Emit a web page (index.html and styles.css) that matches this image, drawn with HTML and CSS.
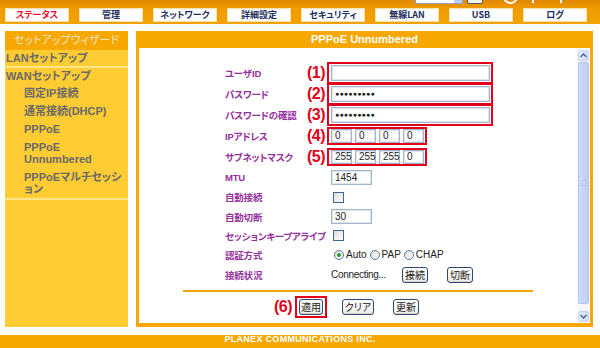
FILE: index.html
```html
<!DOCTYPE html>
<html lang="ja">
  <head>
    <meta charset="UTF-8" />
    <title>PPPoE Unnumbered</title>
    <link rel="stylesheet" href="styles.css">
  </head>
  <body>
    <header class="topbar">
      <div class="top-tools">
        <div class="lang-select"><span class="lang-arrow"></span></div>
        <div class="lang-btn"></div>
        <div class="logo-ring"></div>
        <div class="logo-mark logo-mark-1"></div>
        <div class="logo-mark logo-mark-2"></div>
      </div>
      <nav class="tabs">
        <div class="tab tab-active">ステータス</div>
        <div class="tab">管理</div>
        <div class="tab">ネットワーク</div>
        <div class="tab">詳細設定</div>
        <div class="tab">セキュリティ</div>
        <div class="tab">無線LAN</div>
        <div class="tab">USB</div>
        <div class="tab">ログ</div>
      </nav>
    </header>

    <div class="layout">
      <aside class="sidebar">
        <div class="side-head">セットアップウィザード</div>
        <div class="side-item side-lan">LANセットアップ</div>
        <div class="side-item side-wan">WANセットアップ</div>
        <ul class="side-sub">
          <li>固定IP接続</li>
          <li>通常接続(DHCP)</li>
          <li>PPPoE</li>
          <li class="two">PPPoE<br>Unnumbered</li>
          <li class="two">PPPoEマルチセッシ<br>ョン</li>
        </ul>
      </aside>

      <section class="panel">
        <h1 class="panel-title">PPPoE Unnumbered</h1>
        <div class="panel-body">
          <div class="form">
            <div class="row">
              <span class="label">ユーザID</span>
              <span class="mark">(1)</span>
              <span class="box"><span class="field field-wide"></span></span>
            </div>
            <div class="row">
              <span class="label">パスワード</span>
              <span class="mark">(2)</span>
              <span class="box"><span class="field field-wide dots">●●●●●●●●●</span></span>
            </div>
            <div class="row">
              <span class="label">パスワードの確認</span>
              <span class="mark">(3)</span>
              <span class="box"><span class="field field-wide dots">●●●●●●●●●</span></span>
            </div>
            <div class="row">
              <span class="label">IPアドレス</span>
              <span class="mark">(4)</span>
              <span class="box box-ip">
                <span class="field oct">0</span><span class="sep">.</span>
                <span class="field oct">0</span><span class="sep">.</span>
                <span class="field oct">0</span><span class="sep">.</span>
                <span class="field oct">0</span>
              </span>
            </div>
            <div class="row">
              <span class="label">サブネットマスク</span>
              <span class="mark">(5)</span>
              <span class="box box-ip">
                <span class="field oct">255</span><span class="sep">.</span>
                <span class="field oct">255</span><span class="sep">.</span>
                <span class="field oct">255</span><span class="sep">.</span>
                <span class="field oct">0</span>
              </span>
            </div>
            <div class="row row-s">
              <span class="label">MTU</span>
              <span class="mark"></span>
              <span class="field field-short plain">1454</span>
            </div>
            <div class="row row-s">
              <span class="label">自動接続</span>
              <span class="mark"></span>
              <span class="check"></span>
            </div>
            <div class="row row-xs">
              <span class="label">自動切断</span>
              <span class="mark"></span>
              <span class="field field-short plain">30</span>
            </div>
            <div class="row row-xs">
              <span class="label">セッションキープアライブ</span>
              <span class="mark"></span>
              <span class="check"></span>
            </div>
            <div class="row row-xs">
              <span class="label">認証方式</span>
              <span class="mark"></span>
              <span class="radios">
                <span class="opt"><span class="radio radio-on"></span>Auto</span>
                <span class="opt"><span class="radio"></span>PAP</span>
                <span class="opt"><span class="radio"></span>CHAP</span>
              </span>
            </div>
            <div class="row">
              <span class="label">接続状況</span>
              <span class="mark"></span>
              <span class="status">Connecting...</span>
              <span class="btn btn-conn">接続</span>
              <span class="btn btn-conn btn-gap">切断</span>
            </div>

            <div class="rule"></div>

            <div class="actions">
              <span class="mark mark-inline">(6)</span>
              <span class="box box-btn"><span class="btn btn-apply">適用</span></span>
              <span class="btn btn-clear">クリア</span>
              <span class="btn btn-refresh">更新</span>
            </div>
          </div>

          <div class="scrollbar">
            <div class="sb-btn">
              <svg width="7" height="5" viewBox="0 0 7 5"><polyline points="0.5,4 3.5,1 6.5,4" fill="none" stroke="#4d6185" stroke-width="1.4"/></svg>
            </div>
            <div class="sb-thumb"><span class="sb-grip"></span></div>
            <div class="sb-gap"></div>
            <div class="sb-btn">
              <svg width="7" height="5" viewBox="0 0 7 5"><polyline points="0.5,1 3.5,4 6.5,1" fill="none" stroke="#4d6185" stroke-width="1.4"/></svg>
            </div>
          </div>
        </div>
      </section>
    </div>

    <footer class="footer">PLANEX COMMUNICATIONS INC.</footer>
  </body>
</html>
```

FILE: styles.css
```css
* {
  margin: 0;
  padding: 0;
  box-sizing: border-box;
}

body {
  width: 600px;
  height: 348px;
  overflow: hidden;
  background-color: #fff;
  font-family: "Liberation Sans", "Noto Sans CJK JP", sans-serif;
  font-feature-settings: "palt";
}

/* header band */

.topbar {
  position: relative;
  height: 24px;
  padding: 8px 0 0 5px;
  background: linear-gradient(#e08600 0, #ee9b00 8px, #f3a300 24px);
}

.top-tools {
  position: absolute;
  top: -9px;
  left: 415px;
  display: flex;
  align-items: flex-start;
}

.lang-select {
  width: 48px;
  height: 13px;
  background-color: #fff;
  border: 1px solid #8fa3c0;
  display: flex;
  justify-content: flex-end;
}

.lang-arrow {
  width: 8px;
  background-color: #b9cdf6;
}

.lang-btn {
  width: 16px;
  height: 13px;
  margin-left: 4px;
  background-color: #f3f2ec;
  border: 1px solid #5a5a5a;
  border-radius: 2px;
}

.logo-ring {
  width: 15px;
  height: 15px;
  margin: -2px 0 0 20px;
  border: 2px solid #fff;
  border-radius: 50%;
}

.logo-mark {
  width: 2px;
  height: 12px;
  background-color: #fff;
}

.logo-mark-1 {
  margin-left: 14px;
}

.logo-mark-2 {
  margin-left: 26px;
}

.tabs {
  display: flex;
  gap: 10px;
}

.tab {
  width: 64px;
  height: 14px;
  background-color: #fff;
  border: 1px solid #fbe0ac;
  color: #1d2d5c;
  font-family: "Noto Sans CJK JP", sans-serif;
  font-size: 9px;
  font-weight: bold;
  line-height: 12px;
  text-align: center;
}

.tab-active {
  color: #e8102e;
}

/* page body */

.layout {
  display: flex;
  gap: 8px;
  height: 303px;
  padding: 7px 0 0 5px;
}

.sidebar {
  width: 123px;
  background-color: #ffcc33;
  color: #696969;
  font-size: 11px;
  font-weight: bold;
}

.side-head {
  height: 19px;
  background-color: #f6a800;
  color: #f1e3c6;
  font-weight: normal;
  line-height: 19px;
  text-align: center;
}

.side-item {
  padding-left: 1px;
}

.side-lan {
  height: 18px;
  line-height: 16px;
  border-bottom: 2px solid #ffe48c;
}

.side-wan {
  margin-top: 2px;
  line-height: 12px;
}

.side-sub {
  list-style: none;
  margin-top: 5px;
  padding-left: 19px;
  border-bottom: 2px solid #ffe48c;
}

.side-sub li {
  line-height: 12px;
  margin-bottom: 6px;
}

.side-sub li.two {
  margin-top: 3px;
}

.side-sub li:last-child {
  margin-bottom: 3px;
}

.panel {
  width: 457px;
  display: flex;
  flex-direction: column;
  padding: 0 3px 4px;
  background-color: #f6a800;
}

.panel-title {
  height: 17px;
  color: #fff;
  font-size: 11px;
  font-weight: bold;
  line-height: 17px;
  text-align: center;
}

.panel-body {
  flex: 1;
  display: flex;
  min-width: 0;
  background-color: #fff;
}

.form {
  flex: 1;
  min-width: 0;
  padding: 14px 0 0 86px;
}

.row {
  display: flex;
  align-items: center;
  height: 21px;
}

.row-s {
  height: 20px;
}

.row-xs {
  height: 19px;
}

.label {
  width: 78px;
  flex-shrink: 0;
  color: #95319d;
  font-size: 9.5px;
  font-weight: bold;
  letter-spacing: -0.2px;
  white-space: nowrap;
}

.mark {
  width: 24px;
  flex-shrink: 0;
  padding-right: 2px;
  color: #e2001a;
  font-size: 16px;
  font-weight: bold;
  letter-spacing: -0.5px;
  text-align: right;
}

.box {
  display: flex;
  align-items: center;
  padding: 1px 1px 1px 2px;
  border: 2px solid #e2001a;
}

.box-ip {
  padding: 0 1px 0 2px;
}

.field {
  display: block;
  height: 16px;
  padding-left: 3px;
  border: 1px solid #a3b5cb;
  box-shadow: inset 0 0 0 1px #dfe6ee;
  color: #222;
  font-size: 10px;
  line-height: 14px;
  white-space: nowrap;
}

.field-wide {
  width: 159px;
}

.dots {
  font-size: 7px;
  letter-spacing: 0.2px;
}

.oct {
  width: 21px;
  height: 14px;
  line-height: 12px;
}

.sep {
  width: 3px;
  align-self: flex-end;
  color: #666;
  font-size: 7px;
  line-height: 7px;
  text-align: center;
}

.field-short {
  width: 41px;
  height: 15px;
  line-height: 13px;
}

.plain {
  margin-left: 4px;
}

.check {
  width: 11px;
  height: 11px;
  margin-left: 6px;
  border: 1px solid #3d6792;
  background: linear-gradient(135deg, #dddcd5, #fff);
}

.radios {
  display: flex;
  margin-left: 7px;
  font-size: 10px;
  color: #222;
}

.opt {
  display: flex;
  align-items: center;
  gap: 2px;
  margin-right: 3px;
}

.radio {
  position: relative;
  width: 10px;
  height: 10px;
  border: 1px solid #5e7a9c;
  border-radius: 50%;
  background: linear-gradient(135deg, #dcdcd5, #fff);
}

.radio-on::after {
  content: "";
  position: absolute;
  left: 2px;
  top: 2px;
  width: 4px;
  height: 4px;
  border-radius: 50%;
  background-color: #2f9a2f;
}

.status {
  width: 71px;
  margin-left: 4px;
  color: #222;
  font-size: 10px;
  letter-spacing: -0.3px;
  white-space: nowrap;
}

.btn {
  display: block;
  flex-shrink: 0;
  height: 16px;
  border: 1px solid #2d4a72;
  border-radius: 3px;
  background: linear-gradient(#fff, #ecebe4);
  box-shadow: inset 0 -1px 0 #d6d3c8;
  color: #222;
  font-family: "Noto Sans CJK JP", sans-serif;
  font-size: 10px;
  line-height: 14px;
  text-align: center;
  white-space: nowrap;
}

.btn-conn {
  width: 26px;
}

.btn-gap {
  margin-left: 19px;
}

.rule {
  width: 350px;
  height: 2px;
  margin: 5px 0 0 -42px;
  background-color: #f6a800;
}

.actions {
  display: flex;
  align-items: center;
  margin: 4px 0 0 49px;
}

.mark-inline {
  width: auto;
  padding-right: 0;
  margin-right: 3px;
}

.box-btn {
  padding: 1px 2px;
}

.btn-apply {
  width: 24px;
}

.btn-clear {
  width: 32px;
  margin-left: 15px;
}

.btn-refresh {
  width: 26px;
  margin-left: 19px;
}

/* scrollbar */

.scrollbar {
  flex-shrink: 0;
  width: 11px;
  margin: 2px 1px 1px 0;
  display: flex;
  flex-direction: column;
  background-color: #f5f7fc;
}

.sb-btn {
  height: 11px;
  display: flex;
  align-items: center;
  justify-content: center;
  border: 1px solid #c4d4f7;
  border-radius: 2px;
  background: linear-gradient(90deg, #e6eefd, #cddbfb);
}

.sb-thumb {
  flex: 1;
  position: relative;
  margin: 1px 0;
  border: 1px solid #aec3f3;
  border-radius: 2px;
  background: linear-gradient(90deg, #cfdcfd, #bccffb);
}

.sb-grip {
  position: absolute;
  left: 3px;
  top: 50%;
  width: 4px;
  height: 6px;
  margin-top: -3px;
  border: 1px solid #a9bdf0;
  background-color: #dce6fd;
}

.sb-gap {
  height: 6px;
}

/* footer */

.footer {
  height: 13px;
  margin-top: 8px;
  background-color: #f6a800;
  color: #fff;
  font-size: 9px;
  font-weight: bold;
  letter-spacing: 0.3px;
  line-height: 9px;
  text-align: center;
}
```
